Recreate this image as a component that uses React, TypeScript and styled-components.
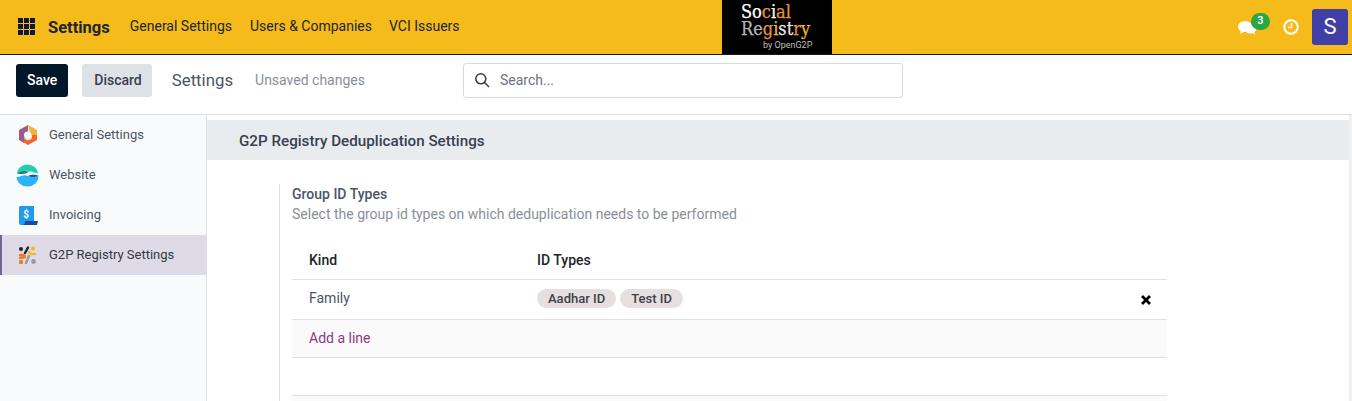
import * as React from "react";
import styled, { createGlobalStyle } from "styled-components";

const GlobalStyle = createGlobalStyle`
  html, body {
    margin: 0;
    padding: 0;
    height: 401px;
    overflow: hidden;
    background: #fff;
    font-family: Roboto, "Liberation Sans", sans-serif;
    color: #4c4c4c;
  }
  * { box-sizing: border-box; }
`;

const Page = styled.div`
  display: flex;
  flex-direction: column;
  width: 1352px;
  height: 401px;
  overflow: hidden;
`;

/* top navbar */
const NavBar = styled.header`
  display: flex;
  align-items: center;
  flex: none;
  height: 55px;
  padding: 0 4px 1px 18px;
  background: #f5bb1a;
  border-bottom: 1px solid #111827;
`;

const NavLeft = styled.div`
  display: flex;
  align-items: center;
  flex: none;
  width: 704px;
`;

const BrandName = styled.span`
  margin: 1px 0 0 13px;
  font-size: 16.5px;
  font-weight: 700;
  color: #212529;
`;

const NavLink = styled.a<{ $gap: number }>`
  margin: -1px 0 0 ${(p) => p.$gap}px;
  font-size: 14px;
  color: #212529;
`;

const LogoBox = styled.div`
  display: flex;
  flex: none;
  flex-direction: column;
  width: 110px;
  height: 54px;
  margin-bottom: -1px;
  padding: 3px 0 0 19px;
  background: #000;
  font-family: "DejaVu Serif Condensed", "DejaVu Serif", "Liberation Serif", serif;
  font-size: 18px;
  font-weight: 400;
  line-height: 17px;
  -webkit-text-stroke: 0.25px currentColor;
`;

const LogoSmall = styled.span`
  margin: 3px 0 0 22px;
  font-family: Roboto, sans-serif;
  font-size: 9px;
  font-weight: 400;
  line-height: 10px;
  color: #bdbdbd;
  -webkit-text-stroke: 0;
`;

const Tint = styled.span<{ $c: string }>`
  display: inline-block;
  color: ${(p) => p.$c};
`;

const NavRight = styled.div`
  display: flex;
  align-items: center;
  justify-content: flex-end;
  flex: 1 1 0;
`;

const ChatWrap = styled.div`
  position: relative;
  width: 18px;
  height: 16px;
  margin: 2px 1px 0 0;
`;

const Badge = styled.span`
  position: absolute;
  top: -7px;
  left: 13px;
  width: 19px;
  height: 17px;
  border-radius: 9px;
  background: #28a745;
  color: #fff;
  font-size: 11px;
  line-height: 15px;
  font-weight: 500;
  text-align: center;
`;

const ClockWrap = styled.div`
  display: flex;
  margin-left: 26px;
`;

const Avatar = styled.div`
  display: flex;
  align-items: center;
  justify-content: center;
  width: 36px;
  height: 36px;
  margin-left: 13px;
  border-radius: 3px;
  background: #3f3fa5;
  color: #fff;
  font-size: 22px;
`;

/* control panel */
const ControlPanel = styled.div`
  display: flex;
  align-items: center;
  flex: none;
  height: 60px;
  padding: 0 0 9px 16px;
  background: #fff;
  border-bottom: 1px solid #dee2e6;
`;

const Button = styled.button<{ $primary?: boolean }>`
  height: 33px;
  padding: 0 ${(p) => (p.$primary ? "11px" : "10px 0 12px")};
  margin-right: ${(p) => (p.$primary ? 14 : 20)}px;
  border: 0;
  border-radius: 3px;
  background: ${(p) => (p.$primary ? "#03172b" : "#dee2e6")};
  color: ${(p) => (p.$primary ? "#fff" : "#374151")};
  font-family: inherit;
  font-size: 14px;
  font-weight: 500;
`;

const PageTitle = styled.span`
  font-size: 16.8px;
  color: #4b5563;
`;

const Unsaved = styled.span`
  margin-left: 22px;
  font-size: 14px;
  color: #8a8f99;
`;

const SearchBox = styled.div`
  display: flex;
  align-items: center;
  width: 440px;
  height: 35px;
  margin-left: 98px;
  padding-left: 10px;
  border: 1px solid #d8dadd;
  border-radius: 3px;
  font-size: 14px;
  color: #6b7280;
`;

const SearchLabel = styled.span`
  margin-left: 10px;
`;

/* body */
const Body = styled.div`
  display: flex;
  flex: 1;
  min-height: 0;
`;

const Sidebar = styled.nav`
  flex: none;
  width: 207px;
  background: #f9fafb;
  border-right: 1px solid #dee2e6;
`;

const SideItem = styled.div<{ $active?: boolean }>`
  display: flex;
  align-items: center;
  height: 40px;
  padding-left: ${(p) => (p.$active ? 14 : 16)}px;
  background: ${(p) => (p.$active ? "#dedbe7" : "transparent")};
  border-left: ${(p) => (p.$active ? "2px solid #71639e" : "0")};
  font-size: 13px;
  color: ${(p) => (p.$active ? "#343a40" : "#4b5563")};
`;

const SideIcon = styled.span`
  display: flex;
  justify-content: center;
  width: 23px;
  margin-right: 10px;
`;

const SideLabel = styled.span`
  margin-top: -2px;
`;

const Content = styled.main`
  flex: 1;
  min-width: 0;
  padding-top: 5px;
`;

const BlockTitle = styled.h2`
  height: 40px;
  margin: 0;
  padding-left: 32px;
  background: #e9ecef;
  font-size: 15.2px;
  font-weight: 500;
  line-height: 42px;
  color: #374151;
`;

const ScrollRail = styled.div`
  flex: none;
  width: 3px;
  background: #f0f0f0;
`;

const Setting = styled.section`
  width: 888px;
  margin: 24px 0 0 72px;
  padding-left: 12px;
  border-left: 1px solid #dee2e6;
`;

const SettingTitle = styled.div`
  font-size: 14px;
  font-weight: 500;
  line-height: 20px;
  color: #4b5563;
`;

const SettingHelp = styled.div`
  margin-bottom: 15px;
  font-size: 14px;
  line-height: 21px;
  color: #8a8f99;
`;

const Row = styled.div<{ $h: number; $bg?: string }>`
  display: flex;
  align-items: center;
  height: ${(p) => p.$h}px;
  padding-left: 17px;
  background: ${(p) => p.$bg || "#fff"};
  border-bottom: 1px solid #dee2e6;
  font-size: 14px;
`;

const KindCell = styled.div`
  width: 228px;
`;

const HeadCell = styled(KindCell)`
  font-weight: 500;
  color: #212529;
`;

const ValueCell = styled.div`
  margin-top: -3px;
  color: #4b5563;
`;

const TagCell = styled.div`
  display: flex;
  flex: 1;
  gap: 4px;
  margin-top: -2px;
`;

const Tag = styled.span`
  display: block;
  height: 19px;
  padding: 0 11px;
  border-radius: 10px;
  background: #e7dfdf;
  font-size: 13px;
  font-weight: 500;
  line-height: 19px;
  color: #3d4148;
`;

const RemoveIcon = styled.span`
  display: flex;
  margin: 0 16px 0 0;
`;

const AddLine = styled.a`
  margin-top: -2px;
  color: #873a85;
`;

const AppsIcon = () => (
  <svg width="17" height="17" viewBox="0 0 17 17" fill="#111827">
    {[0, 6, 12].flatMap((y) =>
      [0, 6, 12].map((x) => <rect key={`${x}-${y}`} x={x} y={y} width="5" height="5" />)
    )}
  </svg>
);

const ChatIcon = () => (
  <svg width="18" height="16" viewBox="0 0 18 16" fill="#fff">
    <ellipse cx="7" cy="6.5" rx="7" ry="5.5" />
    <path d="M3 10l-1 4 5-3z" />
    <ellipse cx="12.5" cy="9.5" rx="5.5" ry="4" />
    <path d="M14 12l3 3-1-4z" />
  </svg>
);

const ClockIcon = () => (
  <svg width="16" height="16" viewBox="0 0 16 16" fill="none" stroke="#fff">
    <circle cx="8" cy="8" r="6.7" strokeWidth="2" />
    <path d="M8.5 4v4.5H5" strokeWidth="1.5" />
  </svg>
);

const SearchIcon = () => (
  <svg width="16" height="16" viewBox="0 0 16 16" fill="none" stroke="#374151" strokeWidth="1.6">
    <circle cx="6.8" cy="6.8" r="5" />
    <path d="M10.5 10.5l4.5 4.5" />
  </svg>
);

const CrossIcon = () => (
  <svg width="10" height="10" viewBox="0 0 10 10" stroke="#000" strokeWidth="2.8">
    <path d="M1 1l8 8M9 1l-8 8" />
  </svg>
);

const GeneralIcon = () => (
  <svg width="20" height="22" viewBox="0 0 20 22">
    <path d="M10 1l9 5v5h-5.5a3.5 3.5 0 0 0-1.7-3z" fill="#f5b335" />
    <path d="M10 1L1 6v10l5 3 .5-6a3.5 3.5 0 0 1 3.5-5.5z" fill="#9b5b8e" />
    <path d="M19 11v5l-9 5-5-3 2-4a3.5 3.5 0 0 0 6.5-3z" fill="#f2682a" />
  </svg>
);

const WebsiteIcon = () => (
  <svg width="23" height="23" viewBox="0 0 23 23">
    <path d="M1 9.5a10.5 9 0 0 1 21 0c-4 0-6-3-10-1.500-3 1.500-7 2.500-11 1.500z" fill="#1fcfb0" />
    <path d="M1 9.500c3-1 5-3 8-2.500 1 .5 2 1 3 1.500-3 1.500-7 2-11 1z" fill="#2b7a72" />
    <path d="M.5 13c5 0 7-3 11-1 4 1.500 7 1.500 11 0a11 10 0 0 1-22 1z" fill="#29b6f6" />
    <path d="M11.500 12c4-1 7-2 11 0-4 1.500-7 1.500-11 0z" fill="#1f4fa8" />
  </svg>
);

const InvoiceIcon = () => (
  <svg width="20" height="21" viewBox="0 0 20 21">
    <path d="M2 1h14v19H3a2 2 0 0 1-2-2V2z" fill="#1c9bef" />
    <path d="M7 16h13l-1 4H3c3 0 4-1 4-4z" fill="#1d4a9e" />
    <text x="8" y="12.5" fontSize="10" fontWeight="700" fontFamily="Roboto" fill="#fff" textAnchor="middle">$</text>
  </svg>
);

const G2pIcon = () => (
  <svg width="19" height="19" viewBox="0 0 19 19" fill="none" strokeLinecap="round">
    <circle cx="3" cy="3" r="2" fill="#222" />
    <path d="M10 1.5L7 7" stroke="#222" strokeWidth="2.4" />
    <circle cx="15" cy="2.5" r="2" fill="#f7b519" />
    <path d="M11 6c1 2 3 2.5 6 2" stroke="#f7b519" strokeWidth="2.4" />
    <path d="M2 9c2 0 3-.5 5 1M2 12l5-1" stroke="#ef7a2b" strokeWidth="2.4" />
    <circle cx="3" cy="16" r="2.2" fill="#ef7a2b" />
    <path d="M11 10l-3 7" stroke="#9a9a9a" strokeWidth="2.4" />
    <circle cx="15.5" cy="15.5" r="2.4" fill="#9a9a9a" />
  </svg>
);

const App = () => (
  <Page>
    <GlobalStyle />
    <NavBar>
      <NavLeft>
        <AppsIcon />
        <BrandName>Settings</BrandName>
        <NavLink $gap={20}>General Settings</NavLink>
        <NavLink $gap={18}>Users &amp; Companies</NavLink>
        <NavLink $gap={17}>VCI Issuers</NavLink>
      </NavLeft>
      <LogoBox>
        <span>
          <Tint $c="#fff">So</Tint>
          <Tint $c="#e8913a">c</Tint>
          <Tint $c="#fff">i</Tint>
          <Tint $c="#e8913a">al</Tint>
        </span>
        <span>
          <Tint $c="#b5b5b5">Re</Tint>
          <Tint $c="#e8913a">g</Tint>
          <Tint $c="#f5bb1a">i</Tint>
          <Tint $c="#e8e8e8">st</Tint>
          <Tint $c="#e8913a">r</Tint>
          <Tint $c="#f5bb1a">y</Tint>
        </span>
        <LogoSmall>by OpenG2P</LogoSmall>
      </LogoBox>
      <NavRight>
        <ChatWrap>
          <ChatIcon />
          <Badge>3</Badge>
        </ChatWrap>
        <ClockWrap>
          <ClockIcon />
        </ClockWrap>
        <Avatar>S</Avatar>
      </NavRight>
    </NavBar>

    <ControlPanel>
      <Button $primary>Save</Button>
      <Button>Discard</Button>
      <PageTitle>Settings</PageTitle>
      <Unsaved>Unsaved changes</Unsaved>
      <SearchBox>
        <SearchIcon />
        <SearchLabel>Search...</SearchLabel>
      </SearchBox>
    </ControlPanel>

    <Body>
      <Sidebar>
        <SideItem>
          <SideIcon><GeneralIcon /></SideIcon>
          <SideLabel>General Settings</SideLabel>
        </SideItem>
        <SideItem>
          <SideIcon><WebsiteIcon /></SideIcon>
          <SideLabel>Website</SideLabel>
        </SideItem>
        <SideItem>
          <SideIcon><InvoiceIcon /></SideIcon>
          <SideLabel>Invoicing</SideLabel>
        </SideItem>
        <SideItem $active>
          <SideIcon><G2pIcon /></SideIcon>
          <SideLabel>G2P Registry Settings</SideLabel>
        </SideItem>
      </Sidebar>
      <Content>
        <BlockTitle>G2P Registry Deduplication Settings</BlockTitle>
        <Setting>
          <SettingTitle>Group ID Types</SettingTitle>
          <SettingHelp>Select the group id types on which deduplication needs to be performed</SettingHelp>
          <Row $h={40}>
            <HeadCell>Kind</HeadCell>
            <HeadCell>ID Types</HeadCell>
          </Row>
          <Row $h={40}>
            <KindCell><ValueCell>Family</ValueCell></KindCell>
            <TagCell>
              <Tag>Aadhar ID</Tag>
              <Tag>Test ID</Tag>
            </TagCell>
            <RemoveIcon><CrossIcon /></RemoveIcon>
          </Row>
          <Row $h={38} $bg="#fafafa">
            <AddLine>Add a line</AddLine>
          </Row>
          <Row $h={38} />
          <Row $h={38} $bg="#fafafa" />
        </Setting>
      </Content>
      <ScrollRail />
    </Body>
  </Page>
);

export default App;
